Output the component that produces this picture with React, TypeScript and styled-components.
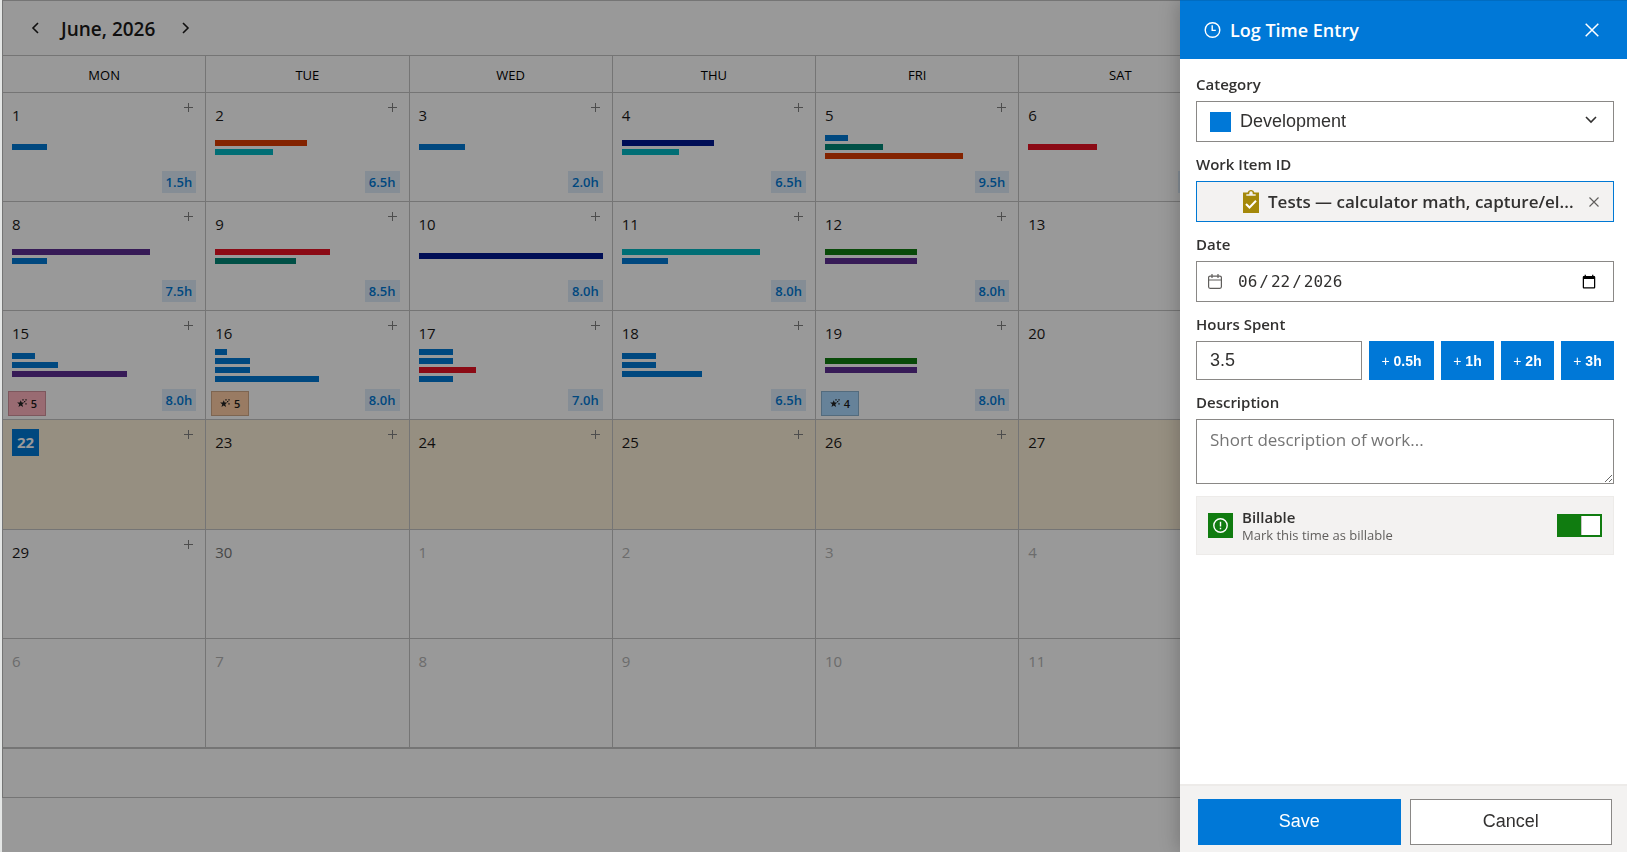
import React, { useState } from 'react';
import styled, { createGlobalStyle } from 'styled-components';

const UI = '"Open Sans", "Noto Sans", sans-serif';
const CONTROL = '"Liberation Sans", Arial, sans-serif';

const color = {
  primary: '#0078d7',
  blue: '#0078d4',
  line: '#c3c3c3',
  text: '#323130',
  orange: '#da3b01',
  aqua: '#00b7c3',
  navy: '#00188f',
  teal: '#008575',
  red: '#e81123',
  purple: '#5c2d91',
  green: '#107c10',
};

const GlobalStyle = createGlobalStyle`
  *, *::before, *::after { box-sizing: border-box; }
  body { margin: 0; background: #e4e6e5; font-family: ${UI}; color: #1b1a19; }
  button { font: inherit; color: inherit; cursor: pointer; }
`;

/* Calendar */

const Page = styled.div`
  height: 100vh;
  min-height: 760px;
  padding-left: 2px;
  overflow: hidden;
`;

const Surface = styled.main`
  position: relative;
  display: flex;
  flex-direction: column;
  height: 100%;
  padding-bottom: 54px;
  background: #fff;
`;

const Calendar = styled.section`
  display: flex;
  flex-direction: column;
  flex: 1;
  margin-right: -2px;
  border: 1px solid ${color.line};
  border-right: 0;
`;

const MonthBar = styled.header`
  display: flex;
  align-items: center;
  gap: 14px;
  height: 54px;
  padding: 0 20px;
`;

const MonthTitle = styled.h1`
  width: 99px;
  margin: 2px 0 0;
  font-size: 19px;
  font-weight: 600;
  line-height: 28px;
  white-space: nowrap;
`;

const NavButton = styled.button`
  display: grid;
  place-items: center;
  width: 24px;
  height: 28px;
  padding: 0;
  border: 0;
  background: none;
`;

const WeekHead = styled.div`
  display: grid;
  grid-template-columns: repeat(8, 1fr);
  height: 38px;
  border-top: 1px solid ${color.line};
  border-bottom: 1px solid ${color.line};
`;

const WeekDay = styled.div`
  border-right: 1px solid ${color.line};
  text-align: center;
  font-size: 13px;
  line-height: 38px;
  color: #000;
`;

const Weeks = styled.div`
  display: grid;
  grid-template-columns: repeat(8, 1fr);
  grid-auto-rows: 1fr;
  flex: 1;
`;

const Cell = styled.div<{ $current?: boolean }>`
  position: relative;
  display: flex;
  flex-direction: column;
  padding: 9px;
  border-right: 1px solid ${color.line};
  border-bottom: 1px solid ${color.line};
  background: ${p => (p.$current ? '#fbefd8' : '#fff')};
`;

const DayNumber = styled.time<{ $tone: Tone }>`
  align-self: flex-start;
  font-size: 15px;
  line-height: 27px;
  color: ${p => ({ normal: '#1b1a19', soft: '#777777', faint: '#b4b4b4', today: '#fff' })[p.$tone]};
  ${p => p.$tone === 'today' && `
    width: 27px;
    text-align: center;
    font-weight: 700;
    background: ${color.blue};
  `}
`;

const AddButton = styled.button`
  position: absolute;
  top: 6px;
  right: 8px;
  display: grid;
  place-items: center;
  width: 17px;
  height: 17px;
  padding: 0;
  border: 0;
  background: none;
`;

const Bars = styled.div`
  display: flex;
  flex-direction: column;
  justify-content: center;
  gap: 3px;
  height: 36px;
`;

const Bar = styled.div<{ $color: string }>`
  height: 6px;
  background: ${p => p.$color};
`;

const HoursBadge = styled.span`
  position: absolute;
  right: 9px;
  bottom: 8px;
  padding: 0 4px;
  font-size: 13px;
  font-weight: 600;
  line-height: 22px;
  color: ${color.blue};
  background: #deecf9;
`;

const StarBadge = styled.span<{ $color: string }>`
  position: absolute;
  left: 5px;
  bottom: 3px;
  display: flex;
  align-items: center;
  justify-content: center;
  gap: 4px;
  width: 38px;
  height: 25px;
  border: 1px solid rgba(0, 0, 0, 0.18);
  font-size: 11px;
  font-weight: 600;
  background: ${p => p.$color};
`;

const CalendarFoot = styled.footer`
  height: 49px;
  border-top: 1px solid ${color.line};
`;

const Scrim = styled.div`
  position: absolute;
  inset: 0;
  background: rgba(0, 0, 0, 0.4);
`;

/* Drawer */

const Drawer = styled.aside`
  position: fixed;
  top: 0;
  right: 0;
  bottom: 0;
  display: flex;
  flex-direction: column;
  width: 447px;
  max-width: 100%;
  color: ${color.text};
  background: #fff;
  box-shadow: -2px 0 18px rgba(0, 0, 0, 0.22);
`;

const DrawerHead = styled.header`
  display: flex;
  align-items: center;
  gap: 9px;
  height: 59px;
  padding: 0 24px;
  border-top: 1px solid #006cc1;
  color: #fff;
  background: ${color.primary};
`;

const DrawerTitle = styled.h2`
  flex: 1;
  margin: 0;
  font-size: 18px;
  font-weight: 600;
  line-height: 26px;
`;

const IconButton = styled.button<{ $muted?: boolean }>`
  display: grid;
  place-items: center;
  flex: none;
  width: 22px;
  height: 28px;
  padding: 0;
  border: 0;
  color: ${p => (p.$muted ? '#605e5c' : 'inherit')};
  background: none;
`;

const Form = styled.form`
  display: flex;
  flex-direction: column;
  flex: 1;
  min-height: 0;
`;

const Fields = styled.div`
  display: flex;
  flex-direction: column;
  gap: 11px;
  flex: 1;
  padding: 14px 13px 14px 16px;
`;

const Field = styled.div`
  display: flex;
  flex-direction: column;
  gap: 6px;
`;

const Label = styled.label`
  font-size: 15px;
  font-weight: 600;
  line-height: 22px;
`;

const Box = styled.div<{ $selected?: boolean }>`
  display: flex;
  align-items: center;
  gap: 9px;
  height: 41px;
  padding: 0 13px;
  border: 1px solid ${p => (p.$selected ? color.blue : '#8a8886')};
  background: ${p => (p.$selected ? '#f3f2f1' : '#fff')};
`;

const Swatch = styled.span`
  width: 21px;
  height: 20px;
  background: ${color.primary};
`;

const CategorySelect = styled.select`
  appearance: none;
  flex: 1;
  height: 100%;
  padding: 0 0 2px;
  border: 0;
  font: 18px ${CONTROL};
  color: inherit;
  background: none;
`;

const WorkItemInput = styled.input`
  flex: 1;
  min-width: 0;
  padding: 0;
  border: 0;
  outline: 0;
  font: 600 17px ${UI};
  color: inherit;
  background: none;
  text-overflow: ellipsis;
`;

const WorkItemBox = styled(Box)`
  padding: 0 8px 0 46px;
`;

const DateBox = styled(Box)`
  gap: 15px;
  padding: 0 14px 0 11px;
`;

const DateInput = styled.input`
  flex: 1;
  padding: 0;
  border: 0;
  outline: 0;
  font: 16px "DejaVu Sans Mono", monospace;
  color: inherit;
  background: none;
  &::-webkit-datetime-edit-text { padding: 0 1px; }
`;

const HoursRow = styled.div`
  display: flex;
  gap: 7px;
  height: 39px;
`;

const HoursInput = styled.input`
  flex: 1;
  min-width: 0;
  padding: 0 13px 1px;
  border: 1px solid #8a8886;
  font: 18px ${CONTROL};
  color: inherit;
`;

const QuickAdd = styled.button<{ $wide?: boolean }>`
  width: ${p => (p.$wide ? 65 : 53)}px;
  padding: 0;
  border: 0;
  font: 700 14px ${CONTROL};
  color: #fff;
  background: ${color.primary};
`;

const Plus = styled.span`
  font-weight: 400;
`;

const Description = styled.textarea`
  display: block;
  height: 65px;
  padding: 7px 13px;
  border: 1px solid #8a8886;
  resize: vertical;
  font: 17px/26px ${UI};
  color: inherit;
  &::placeholder { color: #757575; }
`;

const Billable = styled.div`
  display: flex;
  align-items: center;
  gap: 9px;
  height: 59px;
  margin-top: 1px;
  padding: 0 11px;
  border: 1px solid #edebe9;
  background: #f3f2f1;
`;

const BillableIcon = styled.span`
  display: grid;
  place-items: center;
  width: 25px;
  height: 25px;
  color: #fff;
  background: ${color.green};
`;

const BillableText = styled.label`
  display: flex;
  flex-direction: column;
  flex: 1;
  font-size: 15px;
  font-weight: 600;
  line-height: 20px;
`;

const Hint = styled.small`
  font-size: 13px;
  font-weight: 400;
  line-height: 17px;
  color: #605e5c;
`;

const Toggle = styled.input`
  appearance: none;
  display: flex;
  align-items: center;
  width: 45px;
  height: 23px;
  margin: 0;
  padding: 0 2px;
  background: #8a8886;
  &::before {
    content: '';
    width: 19px;
    height: 19px;
    border-left: 1px solid #c8c6c4;
    background: #fff;
  }
  &:checked {
    justify-content: flex-end;
    background: ${color.green};
  }
`;

const Actions = styled.footer`
  display: flex;
  gap: 9px;
  padding: 13px 15px 7px 18px;
  border-top: 2px solid #edebe9;
  background: #f3f2f1;
`;

const ActionButton = styled.button<{ $primary?: boolean }>`
  flex: 1;
  height: 46px;
  padding: 0 0 1px;
  border: 1px solid ${p => (p.$primary ? color.primary : '#8a8886')};
  font: 18px ${CONTROL};
  color: ${p => (p.$primary ? '#fff' : color.text)};
  background: ${p => (p.$primary ? color.primary : '#fff')};
`;

/* Icons */

const Chevron = ({ d, w, h }: { d: string; w: number; h: number }) => (
  <svg width={w} height={h} viewBox={`0 0 ${w} ${h}`} fill="none" stroke="currentColor" strokeWidth="1.6" aria-hidden>
    <path d={d} />
  </svg>
);

const ClockIcon = () => (
  <svg width="17" height="17" viewBox="0 0 17 17" fill="none" stroke="currentColor" strokeWidth="1.4" aria-hidden>
    <circle cx="8.5" cy="8" r="7.3" />
    <path d="M8.2 3.2v5.2h3.600" />
  </svg>
);

const CrossIcon = ({ size, weight }: { size: number; weight: number }) => (
  <svg width={size} height={size} viewBox="0 0 14 14" stroke="currentColor" strokeWidth={weight} aria-hidden>
    <path d="M.7.7l12.6 12.6M13.3.7L.7 13.3" />
  </svg>
);

const ClipboardIcon = () => (
  <svg width="16" height="23" viewBox="0 0 16 23" aria-hidden>
    <path fill="#a4880a" d="M0 2.5h4.6A3.4 3.4 0 0 1 8 0a3.4 3.4 0 0 1 3.4 2.5H16V23H0z" />
    <path fill="#f3f2f1" d="M3.3 5.7V4.2h3V3a1.7 1.7 0 0 1 3.400 0v1.200h3v1.500z" />
    <path fill="none" stroke="#fff" strokeWidth="2" d="M3 14l3.5 3.5L13 10.8" />
  </svg>
);

const CalendarIcon = () => (
  <svg width="14" height="15" viewBox="0 0 14 15" fill="none" stroke="#605e5c" strokeWidth="1.2" aria-hidden>
    <rect x=".6" y="2.1" width="12.8" height="12.2" rx="1.5" />
    <path d="M.6 6h12.8M4 0v4M10 0v4" />
  </svg>
);

const AlertIcon = () => (
  <svg width="15" height="15" viewBox="0 0 15 15" fill="none" stroke="currentColor" strokeWidth="1.4" aria-hidden>
    <circle cx="7.5" cy="7.5" r="6.7" />
    <path d="M7.5 3.8v4.7M7.5 9.7v1.5" />
  </svg>
);

const PlusIcon = () => (
  <svg width="9" height="9" viewBox="0 0 9 9" stroke="#808080" aria-hidden>
    <path d="M4.5 0v9M0 4.5h9" />
  </svg>
);

const StarIcon = () => (
  <svg width="10" height="9" viewBox="0 0 10 9" fill="#222" aria-hidden>
    <path d="M3.7 1.2l1 2.3 2.6.1-2 1.6.7 2.7-2.3-1.4-2.2 1.4.7-2.7L.1 3.6l2.7-.1z" />
    <path d="M5.3.2h1.4v1.2H5.3zM8.3.2h1.4v1.2H8.3zM7 2h1.3v1.2H7zM8.3 4.3h1.4v1.3H8.3z" />
  </svg>
);

/* Data */

type Tone = 'normal' | 'soft' | 'faint' | 'today';
type Entry = [hours: number, color: string];

const FULL_DAY = 8;
const weekDays = ['MON', 'TUE', 'WED', 'THU', 'FRI', 'SAT', '', ''];
const weeks = [
  [1, 2, 3, 4, 5, 6],
  [8, 9, 10, 11, 12, 13],
  [15, 16, 17, 18, 19, 20],
  [22, 23, 24, 25, 26, 27],
  [29, 30, 1, 2, 3, 4],
  [6, 7, 8, 9, 10, 11],
];

const { blue, orange, aqua, navy, teal, red, purple, green } = color;
const entries: Record<number, Entry[]> = {
  1: [[1.5, blue]],
  2: [[4, orange], [2.5, aqua]],
  3: [[2, blue]],
  4: [[4, navy], [2.5, aqua]],
  5: [[1, blue], [2.5, teal], [6, orange]],
  6: [[3, red]],
  8: [[6, purple], [1.5, blue]],
  9: [[5, red], [3.5, teal]],
  10: [[8, navy]],
  11: [[6, aqua], [2, blue]],
  12: [[4, green], [4, purple]],
  15: [[1, blue], [2, blue], [5, purple]],
  16: [[0.5, blue], [1.5, blue], [1.5, blue], [4.5, blue]],
  17: [[1.5, blue], [1.5, blue], [2.5, red], [1.5, blue]],
  18: [[1.5, blue], [1.5, blue], [3.5, blue]],
  19: [[4, green], [4, purple]],
};

const stars: Record<number, { count: number; color: string }> = {
  15: { count: 5, color: '#ffb3bf' },
  16: { count: 5, color: '#ffcda5' },
  19: { count: 4, color: '#aad9ff' },
};

function Day({ day, week, column }: { day: number; week: number; column: number }) {
  const inMonth = week < 4 || (week === 4 && column < 2);
  const logged = inMonth ? entries[day] : undefined;
  const star = inMonth ? stars[day] : undefined;
  const tone: Tone = !inMonth ? 'faint' : day === 22 ? 'today' : day === 30 ? 'soft' : 'normal';
  const total = logged?.reduce((sum, [h]) => sum + h, 0);
  return (
    <Cell $current={week === 3}>
      <DayNumber $tone={tone}>{day}</DayNumber>
      {inMonth && day < 30 && column < 5 && (
        <AddButton type="button" aria-label="Add entry"><PlusIcon /></AddButton>
      )}
      {logged && (
        <Bars>
          {logged.map(([hours, c], i) => (
            <Bar key={i} $color={c} style={{ width: `${(hours / FULL_DAY) * 100}%` }} />
          ))}
        </Bars>
      )}
      {total !== undefined && <HoursBadge>{total.toFixed(1)}h</HoursBadge>}
      {star && <StarBadge $color={star.color}><StarIcon />{star.count}</StarBadge>}
    </Cell>
  );
}

function LogTimeDrawer() {
  const [hours, setHours] = useState('3.5');
  const add = (n: number) => setHours(h => String((parseFloat(h) || 0) + n));
  return (
    <Drawer>
      <DrawerHead>
        <ClockIcon />
        <DrawerTitle>Log Time Entry</DrawerTitle>
        <IconButton type="button" aria-label="Close"><CrossIcon size={14} weight={1.5} /></IconButton>
      </DrawerHead>
      <Form onSubmit={e => e.preventDefault()}>
        <Fields>
          <Field>
            <Label htmlFor="category">Category</Label>
            <Box>
              <Swatch />
              <CategorySelect id="category">
                <option>Development</option>
              </CategorySelect>
              <Chevron w={18} h={14} d="M4 2l5 5 5-5" />
            </Box>
          </Field>
          <Field>
            <Label htmlFor="work-item">Work Item ID</Label>
            <WorkItemBox $selected>
              <ClipboardIcon />
              <WorkItemInput id="work-item" readOnly value="Tests — calculator math, capture/el..." />
              <IconButton type="button" $muted aria-label="Clear work item"><CrossIcon size={10} weight={1.6} /></IconButton>
            </WorkItemBox>
          </Field>
          <Field>
            <Label htmlFor="date">Date</Label>
            <DateBox>
              <CalendarIcon />
              <DateInput id="date" type="date" defaultValue="2026-06-22" />
            </DateBox>
          </Field>
          <Field>
            <Label htmlFor="hours">Hours Spent</Label>
            <HoursRow>
              <HoursInput id="hours" value={hours} onChange={e => setHours(e.target.value)} />
              {[0.5, 1, 2, 3].map(n => (
                <QuickAdd key={n} type="button" $wide={n < 1} onClick={() => add(n)}>
                  <Plus>+</Plus> {n}h
                </QuickAdd>
              ))}
            </HoursRow>
          </Field>
          <Field>
            <Label htmlFor="description">Description</Label>
            <Description id="description" placeholder="Short description of work..." />
          </Field>
          <Billable>
            <BillableIcon><AlertIcon /></BillableIcon>
            <BillableText htmlFor="billable">
              Billable
              <Hint>Mark this time as billable</Hint>
            </BillableText>
            <Toggle id="billable" type="checkbox" role="switch" defaultChecked />
          </Billable>
        </Fields>
        <Actions>
          <ActionButton type="submit" $primary>Save</ActionButton>
          <ActionButton type="button">Cancel</ActionButton>
        </Actions>
      </Form>
    </Drawer>
  );
}

export default function App() {
  return (
    <Page>
      <GlobalStyle />
      <Surface>
        <Calendar>
          <MonthBar>
            <NavButton type="button" aria-label="Previous month"><Chevron w={8} h={12} d="M7 1L2 6l5 5" /></NavButton>
            <MonthTitle>June, 2026</MonthTitle>
            <NavButton type="button" aria-label="Next month"><Chevron w={8} h={12} d="M1 1l5 5-5 5" /></NavButton>
          </MonthBar>
          <WeekHead>
            {weekDays.map((name, i) => <WeekDay key={i}>{name}</WeekDay>)}
          </WeekHead>
          <Weeks>
            {weeks.map((days, w) => (
              <React.Fragment key={w}>
                {days.map((day, c) => <Day key={c} day={day} week={w} column={c} />)}
                <Cell $current={w === 3} />
                <Cell />
              </React.Fragment>
            ))}
          </Weeks>
          <CalendarFoot />
        </Calendar>
        <Scrim />
      </Surface>
      <LogTimeDrawer />
    </Page>
  );
}
